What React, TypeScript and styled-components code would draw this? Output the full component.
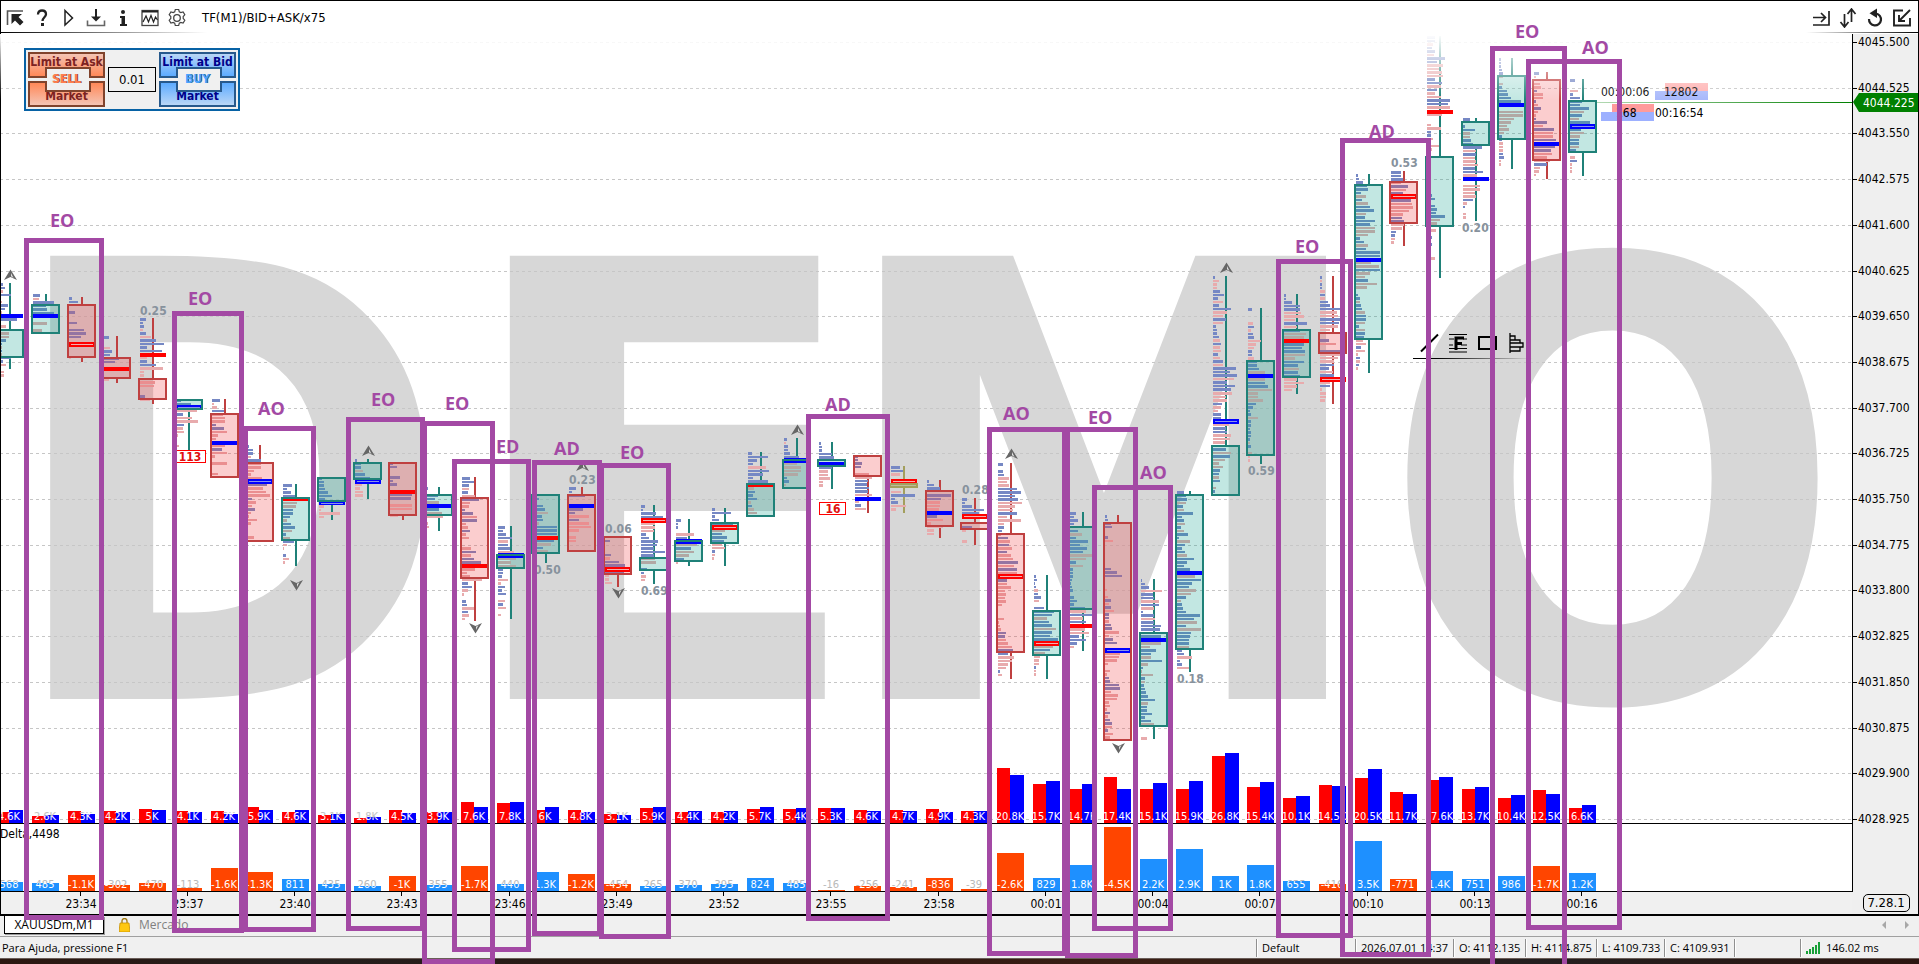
import React from 'react';
import styled, { createGlobalStyle, css } from 'styled-components';

const UI = `'DejaVu Sans Condensed', 'Noto Sans', sans-serif`;
const STATUS = `'Open Sans', 'Noto Sans', sans-serif`;

const GlobalStyle = createGlobalStyle`
  * { box-sizing: border-box; }
  html, body { margin: 0; padding: 0; }
  body { background: #f0f0f0; color: #000; font: 13px/16px ${UI}; overflow: hidden; }
  button, input { font: inherit; color: inherit; }
`;

/* ---------- data ---------- */

type Tone = 'up' | 'down' | 'flat';
type Poc = [top: number, height: number, color: 'b' | 'r', hollow?: boolean];
interface Candle {
  wick: [number, number];
  body: [number, number];
  tone: Tone;
  poc: Poc;
  rows: number[];
}

// rows: volume-profile bars, one per price step; positive = ask side, negative = bid side
const k = (wick: [number, number], body: [number, number], tone: Tone, poc: Poc, rows: number[]): Candle => ({ wick, body, tone, poc, rows });

const CANDLES: Candle[] = [
  k([283, 369], [329, 358], 'up', [314, 4, 'b'], [6, 8, -6, 14, 0, -5, 11, 8, -5, 14, 20, 0, -9, 16, -12, -12, 9, 5, -5, 5, -5, 14, 6, -9, 0, -7, -7]),
  k([294, 304], [304, 334], 'up', [314, 4, 'b'], [7, -6, 21, 13, 14, 21, 0, 0, -14, 0, -9]),
  k([297, 362], [304, 358], 'down', [342, 5, 'r', true], [3, 9, 0, 0, 6, 0, 0, 8, 0, 15, 17, 12, 0, 0, 0, 0, 0, -2]),
  k([336, 383], [357, 379], 'down', [367, 4, 'r'], [5, 0, 0, -6, 8, 6, 15, 11, 0, 0, 0, 0, -5]),
  k([318, 404], [378, 400], 'down', [353, 4, 'r'], [6, 3, 4, -3, 6, -11, 16, 24, 7, 22, 0, -7, 7, 16, -23, -4, -4, 0, -15, -14, 0, 0, 5, -10]),
  k([399, 450], [399, 410], 'up', [405, 4, 'b', true], [5, 15, 0, -21, 7, -16, -22, 8, -7, -8, -2, 1, 1, -3]),
  k([399, 413], [413, 478], 'down', [441, 4, 'b'], [8, -2, -5, 12, -11, -13, -13, 4, 12, -15, -6, -4, 0, -13, 10, -15, -3, 0, -15, 0, 0, -6]),
  k([445, 462], [462, 542], 'down', [479, 5, 'b', true], [2, 6, 6, -4, 14, -14, -14, -7, -4, -15, 0, 20, -16, -19, -23, 5, -9, -5, 8, -4, -2, -10, -4, 0, 0, 0, -7]),
  k([484, 566], [497, 541], 'up', [498, 3, 'r'], [9, 4, 8, 12, 0, -14, -13, 10, 10, 7, -4, 8, 12, -9, 3, -7, 11, -4, -1, 0, 3, -6, -2]),
  k([477, 520], [477, 502], 'up', [501, 4, 'b', true], [3, 5, 5, 6, 9, 13, 6, 0, -5, -2, -21, -5]),
  k([459, 499], [462, 480], 'up', [479, 5, 'b', true], [2, 6, 6, -8, 10, 15, 0, -7, -5, -8, -8]),
  k([462, 520], [462, 516], 'down', [490, 4, 'r'], [3, 7, 0, 0, 10, 3, 7, 0, 0, 22, 21, 0, -22, -22, 0, -8]),
  k([487, 531], [494, 516], 'up', [504, 4, 'b'], [2, 1, 12, 9, -13, 0, 13, -16, -17, 1, -2, -3]),
  k([477, 621], [497, 579], 'down', [564, 4, 'r'], [8, 12, 7, -7, 6, -13, 17, -8, -7, 3, 11, -15, 15, -4, -6, 8, -4, -7, 0, 0, -9, 14, -9, 12, 19, 0, -13, -5, -8, -20, 6, 10, -6, -2, 0, 4, 5, -12, 6, -7, -3]),
  k([526, 619], [554, 569], 'up', [553, 5, 'b'], [7, 5, 8, 14, -10, 10, 12, -16, 0, -18, -13, -18, 5, 5, 4, -10, -3, 7, 4, 8, 0, -7, 5, -8, 0, -3]),
  k([494, 563], [494, 554], 'up', [536, 4, 'r'], [0, 6, 2, 10, 12, -15, 9, 10, -6, 24, 24, 24, 0, 21, -18, 10, -15]),
  k([487, 494], [494, 552], 'down', [504, 4, 'b'], [7, 3, 16, 0, 0, 0, 14, 6, -20, 10, -20, -22, -10, 0, -7, -7]),
  k([536, 587], [536, 575], 'down', [567, 5, 'r', true], [0, 5, 0, 0, 0, 6, -5, 14, 20, 0, 19, -4, -4, -7]),
  k([505, 584], [557, 571], 'up', [518, 5, 'r', true], [4, 2, 15, 22, 0, -14, -14, -13, 5, 8, 17, 16, 13, 24, 13, -14, -15, 0, 6, 3, -5, -4]),
  k([519, 566], [540, 562], 'up', [539, 5, 'b'], [5, 2, 2, 0, -18, 11, 0, -21, 15, -18, -13, 8, -2]),
  k([508, 566], [522, 544], 'up', [525, 5, 'r', true], [3, 19, 3, 7, 21, 0, -13, 10, 15, 12, -10, -13, 3, -3, -2]),
  k([452, 483], [483, 517], 'up', [484, 3, 'r'], [4, 20, 9, 5, -18, 21, 15, 5, 20, 0, -6, 7, 5, 9, -3, 4, -6, -9]),
  k([438, 459], [459, 489], 'up', [458, 5, 'b'], [3, -2, 4, 4, 6, 15, 0, -13, -17, -17, -14, 3, 5, -2]),
  k([442, 489], [459, 467], 'up', [462, 4, 'b'], [2, 3, 3, 13, 15, 0, 0, 13, -9, -9, -11, -4, -4]),
  k([455, 513], [455, 477], 'down', [497, 4, 'b'], [3, 3, 7, 6, 0, -14, -17, 13, 12, 14, 13, -17, 0, -4, 6, -11]),
  k([466, 513], [483, 488], 'flat', [479, 4, 'r', true], [9, 12, -9, 0, 0, 0, 0, -10, 24, 4, 7, -15, -5]),
  k([480, 538], [490, 527], 'down', [511, 4, 'b'], [2, 7, 13, 0, 24, 14, -13, -13, -12, 0, 10, -16, -4, -16, -7, -7]),
  k([498, 545], [522, 530], 'down', [514, 5, 'r', true], [5, 3, 10, 22, 17, 0, 0, 0, 10, -4, 0, 0, -5]),
  k([463, 679], [533, 653], 'down', [574, 5, 'r', true], [5, 0, 5, 6, -11, -9, -11, 19, 23, 17, 20, -24, -17, -15, 19, -9, -23, -6, 6, 4, -3, 10, -12, 11, -14, 9, -13, -15, 20, -16, 19, -19, 0, 9, -9, -13, -7, -8, -7, -8, -4, 0, 0, 0, -6, -1, -2, -3, 8, 7, -8, -10, -14, 15, 10, -16, -14, -10, -8, 2, -4]),
  k([575, 679], [610, 656], 'up', [641, 5, 'r', true], [2, 3, 1, 2, -4, 4, 7, -5, 0, 10, 20, 18, -13, 15, 18, -22, 18, 16, 24, 0, -19, 16, -11, -6, -5, -5, 2, -2, -2]),
  k([512, 651], [526, 610], 'up', [624, 4, 'r'], [6, 4, 8, 4, 0, 8, -12, 6, 18, 10, 17, 13, -22, -16, 6, -13, 3, 3, 3, 2, 1, 2, 3, 0, 4, 7, 4, 15, -16, 22, -13, 16, 0, -15, -19, 9, 16, 7, -4]),
  k([515, 522], [522, 741], 'down', [648, 5, 'b', true], [2, 3, 6, 7, 0, 0, 3, -8, 0, 0, 0, 0, 0, 0, 0, 6, 12, 17, 0, 0, 0, -2, 0, -3, 6, -4, 6, -9, 4, 4, -4, 6, 7, -14, -4, 8, 12, 0, 0, -15, -14, -12, -3, 0, -5, -2, 4, 5, 14, 15, -6, -13, -12, -4, -5, -2, 5, -3, 5, 7, -7, 3, -8, -5]),
  k([579, 739], [632, 727], 'up', [638, 4, 'b'], [1, 4, 8, -21, 12, 13, -18, 18, -13, 2, 13, -14, 13, 20, 19, -12, 20, 0, -20, -9, 15, 10, -10, 21, -7, 2, -1, -12, 4, -4, 3, 4, 5, 7, 14, -7, 6, 6, 11, 4, 10, -13, 0, 0, 0, -6]),
  k([491, 672], [494, 650], 'up', [571, 4, 'b'], [7, 9, 10, -9, 6, -7, 16, 5, 7, -8, 4, -7, 11, 2, -13, 8, 5, 8, -10, 17, 10, 7, 13, 0, -18, 24, 15, 12, -19, -14, 9, -4, 5, 6, 9, 23, 17, -20, 9, -24, 14, 13, 12, 12, -12, 5, 7, -15, 3, 5, -12]),
  k([276, 445], [445, 496], 'up', [419, 5, 'b', true], [2, -6, -4, -4, 7, 11, 5, -10, 6, 18, -14, -10, 13, -10, 3, 4, 4, 6, -7, 8, -7, -8, 5, -7, 10, -10, 23, 17, 24, -21, 14, 22, 18, -19, -13, -14, 9, -8, -5, 8, 8, 0, -16, 13, 14, -18, -17, -12, 16, 13, -18, 17, -12, -6, -10, 7, 6, -6, 7, 0, -3, 2]),
  k([308, 464], [360, 456], 'up', [374, 4, 'b'], [4, 0, 0, 0, -5, 6, -3, 5, 6, -13, -8, -6, 4, 4, -6, 9, 9, 11, -17, 0, -17, 17, 20, -24, -10, -10, -15, 8, 5, 2, 3, -10, 3, 3, 2, 3, 3, 2, -2, 3, 0, -4, -2, -2]),
  k([294, 394], [329, 378], 'up', [339, 4, 'r'], [2, 2, 8, 16, 16, -17, -20, -11, 23, -13, 16, -22, -20, 0, 20, 18, 21, -21, -11, 20, 14, -15, 14, 16, -13, -20, -13, -8]),
  k([276, 404], [332, 354], 'down', [377, 5, 'r', true], [2, -2, 2, 2, -5, 5, -5, 8, 10, 22, -17, -18, 22, 19, -18, -10, 0, 0, 9, -16, 0, 21, -20, -18, -14, 14, 9, -13, 14, 0, -10, 10, -2, -6, -6, -5]),
  k([174, 373], [184, 340], 'up', [258, 4, 'b'], [2, 3, 7, 11, 12, 5, -10, 6, -12, 14, 18, -10, 9, 19, 14, -19, -19, -12, 4, 8, -12, 10, 24, 24, 0, -15, -23, 24, -14, -9, 12, -21, -11, 0, 2, 4, -4, 5, 6, -9, 10, 10, -9, 3, -9, 9, 8, -7, -10, 5, -9, -2, 4, -4, 3, -2]),
  k([171, 246], [181, 224], 'down', [194, 5, 'r', true], [10, 10, 12, -10, 17, -15, 12, 0, 20, -21, -22, -18, -12, 11, 13, -13, -11, 5, 4, -4, -3]),
  k([36, 278], [156, 227], 'up', [110, 4, 'r'], [8, 8, -6, 5, 8, -7, 18, 10, -16, -12, -15, -16, 8, 15, -14, 10, -8, -14, 23, 21, -23, 0, -15, 0, 0, -4, -14, 4, 4, -6, 1, -12, -5, 0, 0, 4, 0, 0, 0, 0, 0, 0, 0, 0, 0, 5, 8, 4, 8, 10, 9, 18, -13, -10, 4, -9, 0, 5, -4, 5, 0, 0, 0, -8]),
  k([118, 221], [121, 146], 'up', [177, 4, 'b'], [7, 0, 2, 12, -7, -7, 8, 10, 19, -13, 13, -12, -13, -15, 12, 20, -14, -17, 0, -17, -17, -12, -13, 10, -4, 2, 0, -3, -3]),
  k([58, 169], [75, 140], 'up', [103, 4, 'b'], [2, 2, 2, 3, 4, -4, 0, -4, 3, 8, 9, 12, 22, -17, 0, -24, -24, -15, -12, -8, -10, -5, 3, 3, -4, -4, -4, 4, 5, -2, -2]),
  k([72, 179], [79, 161], 'down', [142, 4, 'b'], [5, -2, 0, -6, -7, 3, -9, -9, 2, -4, 7, -4, -2, 2, 13, -9, 20, -19, -19, 22, 0, 21, 17, -18, -13, -16, 13, -6, -5, -2]),
  k([79, 176], [100, 153], 'up', [124, 5, 'b', true], [5, 0, 0, -8, 3, 10, 12, 10, 19, -14, 12, -9, 20, 0, 11, -14, -10, 9, 9, -9, 6, 0, -5, 7, -2, -2, -2]),
];

type Flow = [sell: number, buy: number, total: string, deltaHeight: number, delta: string];
const FLOWS: Flow[] = [
  [11, 13, '4.6K', 9, '568'], [7, 8, '2.6K', 8, '485'], [12, 9, '4.3K', 16, '-1.1K'], [12, 11, '4.2K', 6, '-302'],
  [14, 13, '5K', 8, '-470'], [12, 11, '4.1K', 3, '-113'], [12, 9, '4.2K', 23, '-1.6K'], [16, 13, '5.9K', 19, '-1.3K'],
  [11, 13, '4.6K', 12, '811'], [8, 9, '3.1K', 7, '435'], [5, 6, '1.8K', 5, '260'], [13, 10, '4.5K', 15, '-1K'],
  [11, 11, '3.9K', 6, '355'], [21, 16, '7.6K', 25, '-1.7K'], [20, 21, '7.8K', 7, '440'], [13, 16, '6K', 19, '1.3K'],
  [13, 11, '4.8K', 17, '-1.2K'], [9, 8, '3.1K', 7, '-454'], [15, 16, '5.9K', 5, '265'], [11, 12, '4.4K', 6, '370'],
  [11, 12, '4.2K', 7, '395'], [14, 16, '5.7K', 13, '824'], [14, 15, '5.4K', 8, '485'], [15, 15, '5.3K', 1, '-16'],
  [13, 12, '4.6K', 5, '-256'], [13, 12, '4.7K', 4, '-241'], [14, 11, '4.9K', 13, '-836'], [12, 12, '4.3K', 2, '-39'],
  [55, 48, '20.8K', 38, '-2.6K'], [39, 42, '15.7K', 13, '829'], [34, 39, '14.7K', 26, '1.8K'], [46, 34, '17.4K', 64, '-4.5K'],
  [34, 40, '15.1K', 32, '2.2K'], [34, 42, '15.9K', 42, '2.9K'], [67, 70, '26.8K', 15, '1K'], [36, 41, '15.4K', 26, '1.8K'],
  [25, 27, '10.1K', 10, '655'], [38, 37, '14.5K', 7, '-416'], [45, 54, '20.5K', 50, '3.5K'], [31, 29, '11.7K', 12, '-771'],
  [43, 46, '17.6K', 20, '1.4K'], [34, 36, '13.7K', 12, '751'], [25, 28, '10.4K', 15, '986'], [33, 29, '12.5K', 25, '-1.7K'],
  [15, 18, '6.6K', 18, '1.2K'],
];

const TIMES = ['23:34', '23:37', '23:40', '23:43', '23:46', '23:49', '23:52', '23:55', '23:58', '00:01', '00:04', '00:07', '00:10', '00:13', '00:16'];
const PRICES = Array.from({ length: 18 }, (_, i) => ({
  y: Math.round(42 + i * 45.7),
  label: (4045.5 - i * 0.975).toFixed(3),
}));
const RATIOS: [number, number, string][] = [
  [140, 315, '0.25'], [534, 574, '0.50'], [569, 484, '0.23'], [605, 533, '0.06'], [641, 595, '0.69'], [962, 494, '0.28'],
  [1177, 683, '0.18'], [1248, 475, '0.59'], [1391, 167, '0.53'], [1462, 232, '0.20'],
];
const MARKS: [number, number, 1 | -1][] = [
  [10, 275, 1], [368, 451, 1], [582, 466, 1], [797, 430, 1], [1011, 454, 1], [1226, 268, 1],
  [296, 585, -1], [475, 628, -1], [618, 593, -1], [1118, 748, -1],
];
const COUNTS: [number, number, string][] = [[176, 450, '113'], [819, 502, '16']];

const ZONES: [number, number, number, number][] = [
  [24, 238, 104, 920], [172, 311, 244, 933], [243, 426, 316, 932], [346, 417, 425, 931], [422, 421, 495, 964],
  [452, 459, 531, 952], [532, 460, 602, 936], [599, 463, 671, 939], [806, 414, 890, 921], [987, 427, 1067, 956],
  [1065, 427, 1138, 958], [1092, 485, 1173, 931], [1276, 259, 1353, 938], [1340, 138, 1431, 957], [1490, 46, 1567, 975],
  [1526, 59, 1622, 930],
];
const ZONE_TAGS: [number, number, string][] = [
  [50, 227, 'EO'], [188, 305, 'EO'], [258, 415, 'AO'], [371, 406, 'EO'], [445, 410, 'EO'], [496, 453, 'ED'], [554, 455, 'AD'],
  [620, 459, 'EO'], [825, 411, 'AD'], [1003, 420, 'AO'], [1088, 424, 'EO'], [1140, 479, 'AO'], [1295, 253, 'EO'],
  [1369, 138, 'AD'], [1515, 38, 'EO'], [1582, 54, 'AO'],
];

const TONES: Record<Tone, { line: string; fill: string }> = {
  up: { line: '#1f8178', fill: 'rgba(11,159,139,.25)' },
  down: { line: '#bf4040', fill: 'rgba(239,55,60,.25)' },
  flat: { line: '#a39f5d', fill: 'rgba(163,159,93,.5)' },
};

const centre = (i: number) => Math.round(10 + 35.75 * i);
const ROW_STEP = 3.515;

/* ---------- styled parts ---------- */

const Terminal = styled.div`
  position: relative;
  display: flex;
  flex-direction: column;
  min-height: 100vh;
  overflow: hidden;
`;
const TopBar = styled.header`
  display: flex;
  justify-content: space-between;
  height: 34px;
  padding: 0 3px 0 0;
  background:
    linear-gradient(90deg, #000, transparent) left bottom 1px / 206px 1px no-repeat,
    linear-gradient(270deg, #000, transparent) right bottom 1px / 112px 1px no-repeat,
    #fff;
  border: solid #000;
  border-width: 1px 1px 0;
`;
const ToolGroup = styled.nav`
  display: flex;
  align-items: center;
`;
const ToolButton = styled.button`
  display: grid;
  place-items: center;
  width: 27px;
  height: 24px;
  padding: 0;
  border: 0;
  background: none;
  color: #222;
`;
const ChartTitle = styled.h1`
  margin: 0 0 0 12px;
  font: 13px/16px ${UI};
`;
const Workspace = styled.main`
  display: grid;
  grid-template-columns: minmax(0, 1fr) 67px;
  border-bottom: 2px solid #000;
`;
const Panes = styled.div`
  display: flex;
  flex-direction: column;
  min-width: 0;
`;
const PricePane = styled.section`
  position: relative;
  background: #fff;
  border-bottom: 1px solid #000;
`;
const DeltaPane = styled.section`
  background: #fff;
  border-bottom: 1px solid #000;
`;
const Plot = styled.svg<{ $h: number }>`
  display: block;
  width: 100%;
  height: ${(p) => p.$h}px;
  font: 12px ${UI};
`;
const PriceAxis = styled.aside`
  display: flex;
  flex-direction: column;
  justify-content: space-between;
  background: #efefef;
  border-right: 1px solid #000;
`;
const Scale = styled.div`
  border-left: 1px solid #000;
  height: 858px;
`;
const Version = styled.span`
  align-self: center;
  margin: 0 0 2px 2px;
  width: 47px;
  height: 18px;
  border: 1px solid #000;
  border-radius: 5px;
  text-align: center;
`;

const TradePanel = styled.form`
  position: absolute;
  top: 14px;
  left: 24px;
  display: flex;
  align-items: center;
  gap: 3px;
  padding: 2px;
  background: #f0f0f0;
  border: 2px solid #0762a5;
`;
const Side = styled.div`
  position: relative;
  display: flex;
  flex-direction: column;
  gap: 3px;
`;
type Kind = 'sell' | 'buy';
const PALETTE = {
  sell: { edge: '#80432c', light: '#f4c4b4', strong: '#ff8858', text: '#7d2222', word: '#ff7f50' },
  buy: { edge: '#27598c', light: '#b9d6f6', strong: '#5dabff', text: '#00008b', word: '#4aa3ff' },
};
const OrderButton = styled.button<{ $kind: Kind; $low?: boolean }>`
  position: relative;
  display: flex;
  justify-content: center;
  align-items: ${(p) => (p.$low ? 'flex-end' : 'flex-start')};
  width: 77px;
  height: 26px;
  padding: 0;
  white-space: nowrap;
  border: 2px solid ${(p) => PALETTE[p.$kind].edge};
  color: ${(p) => PALETTE[p.$kind].text};
  font: bold 12px/17px ${UI};
  background: linear-gradient(${(p) => (p.$low ? '0deg' : '180deg')}, ${(p) => PALETTE[p.$kind].light}, ${(p) => PALETTE[p.$kind].strong});

  /* notch that makes room for the side's name */
  &::after {
    content: '';
    position: absolute;
    left: 15px;
    ${(p) => (p.$low ? 'top: -2px;' : 'bottom: -2px;')}
    width: 42px;
    height: 9px;
    border: solid ${(p) => PALETTE[p.$kind].edge};
    border-width: ${(p) => (p.$low ? '0 2px 2px' : '2px 2px 0')};
    background: #f0f0f0;
  }
`;
const SideWord = styled.span<{ $kind: Kind }>`
  position: absolute;
  inset: 19px 0 auto;
  text-align: center;
  font: bold 12px/17px ${UI};
  color: ${(p) => PALETTE[p.$kind].word};
  text-shadow: 1px 0 0 ${(p) => PALETTE[p.$kind].edge};
  pointer-events: none;
`;
const Lots = styled.input`
  width: 48px;
  height: 25px;
  padding: 0;
  border: 1px solid #000;
  background: #f0f0f0;
  text-align: center;
`;
const DrawTools = styled.div`
  position: absolute;
  top: 298px;
  left: 1413px;
  display: flex;
  align-items: flex-start;
  width: 120px;
  height: 27px;
  padding: 0 2px 0 1px;
  background: linear-gradient(90deg, #000 20%, transparent) left bottom / 100% 1px no-repeat;
`;
const DrawButton = styled(ToolButton)`
  width: 29px;
  height: 22px;
  color: #000;
`;

const Tabs = styled.nav`
  display: flex;
  align-items: flex-start;
  height: 21px;
  padding-left: 4px;
  border-bottom: 1px solid #a0a0a0;
  font: 12px/16px ${STATUS};
`;
const tabBase = css`
  height: 18px;
  padding: 0;
  border: 0;
  background: none;
  white-space: nowrap;
`;
const ActiveTab = styled.button`
  ${tabBase}
  width: 100px;
  background: #fff;
  border: solid #000;
  border-width: 0 1px 1px;
  box-shadow: 1px 1px 0 #999;
`;
const MarketTab = styled.button`
  ${tabBase}
  display: flex;
  align-items: center;
  gap: 9px;
  margin-left: 15px;
  color: #808080;
`;
const Pager = styled.div`
  display: flex;
  gap: 6px;
  margin: 0 5px 0 auto;
`;
const PageButton = styled.button`
  ${tabBase}
  width: 16px;
`;
const StatusBar = styled.footer`
  display: flex;
  align-items: center;
  height: 21px;
  font: 11px/16px ${STATUS};
`;
const Hint = styled.span`
  flex: 1;
  padding-left: 2px;
`;
const Cell = styled.span<{ $w: number }>`
  display: flex;
  align-items: center;
  gap: 6px;
  width: ${(p) => p.$w}px;
  height: 18px;
  padding-left: 5px;
  border-left: 1px solid #8f8f8f;
  box-shadow: inset 1px 0 0 #fff;
  white-space: nowrap;
`;
const Desktop = styled.div`
  flex: 1;
  min-height: 6px;
  border-top: 1px solid #6a5d58;
  background: linear-gradient(90deg, #2c1710, #241f1e 15%, #2d1710 40%, #3a1f15 60%, #241f20 80%, #2c1510);
`;
const Overlay = styled.svg`
  position: absolute;
  inset: 0;
  width: 100%;
  height: 100%;
  pointer-events: none;
  font: bold 18px 'Open Sans', 'Noto Sans', sans-serif;
`;

/* ---------- drawings ---------- */

const Glyph = ({ children }: { children: React.ReactNode }) => (
  <svg width="20" height="20" viewBox="0 0 20 20" fill="none" stroke="currentColor" strokeWidth="1.5">{children}</svg>
);

const CandleShape = ({ c, x }: { c: Candle; x: number }) => {
  const t = TONES[c.tone];
  const [top, h, color, hollow] = c.poc;
  const paint = color === 'b' ? '#0000ff' : '#ff0000';
  const rowTop = (i: number) => Math.round(c.wick[0] + i * ROW_STEP);
  return (
    <g shapeRendering="crispEdges">
      {c.wick[0] < c.body[0] && <rect x={x - 1} y={c.wick[0]} width={2} height={c.body[0] - c.wick[0]} fill={t.line} />}
      {c.wick[1] > c.body[1] && <rect x={x - 1} y={c.body[1]} width={2} height={c.wick[1] - c.body[1]} fill={t.line} />}
      {c.rows.map((w, i) => w !== 0 && (
        <rect key={i} x={x - 13} y={rowTop(i)} width={Math.abs(w)} height={rowTop(i + 1) - rowTop(i) - 1} fill={w > 0 ? '#7688c4' : '#e8abad'} />
      ))}
      <rect x={x - 14} y={c.body[0] + 1} width={27} height={Math.max(c.body[1] - c.body[0] - 2, 1)} fill={t.fill} />
      <rect x={x - 13} y={top} width={26} height={h} fill={paint} />
      {hollow && <rect x={x - 11} y={top + 2} width={22} height={1} fill={color === 'b' ? '#8a94e8' : '#f3b0b0'} />}
      <rect x={x - 14} y={c.body[0] + 1} width={27} height={Math.max(c.body[1] - c.body[0] - 2, 2)} fill="none" stroke={t.line} strokeWidth={2} />
    </g>
  );
};

const PricePlot = () => (
  <Plot $h={789} role="img" aria-label="Price chart">
    <defs>
      <linearGradient id="fade" x1="0" y1="0" x2="0" y2="1">
        <stop offset="0" stopColor="#fff" />
        <stop offset="1" stopColor="#fff" stopOpacity="0" />
      </linearGradient>
      <linearGradient id="quote" gradientUnits="userSpaceOnUse" x1="1597" y1="0" x2="1853" y2="0">
        <stop offset="0" stopColor="#008000" stopOpacity=".3" />
        <stop offset="1" stopColor="#008000" />
      </linearGradient>
    </defs>
    <g transform="translate(0,-34)">
      <text y="699" fill="#d7d7d7" fontSize="608" fontWeight="bold">
        <tspan x="0">D</tspan>
        <tspan x="454" fontFamily="DejaVu Sans">E</tspan>
        <tspan x="832 1380">MO</tspan>
      </text>
      {PRICES.map((p) => (
        <line key={p.y} x1="0" x2="100%" y1={p.y + 0.5} y2={p.y + 0.5} stroke="#c6c6c6" strokeDasharray="3 3" />
      ))}
      {CANDLES.map((c, i) => <CandleShape key={i} c={c} x={centre(i)} />)}
      {MARKS.map(([x, y, d]) => (
        <g key={x} transform={`translate(${x + 0.5},${y}) scale(1,${d})`}>
          <path d="M0 -5.500 L6.500 5 L0 2 L-6.500 5Z" fill="#666" />
          <path d="M.5 -2 L3 3 L.5 1.200Z" fill="#e4e4e4" />
        </g>
      ))}
      {RATIOS.map(([x, y, s]) => <text key={x} x={x} y={y} fill="#87929d" fontWeight="bold">{s}</text>)}
      {COUNTS.map(([x, y, s]) => (
        <g key={s}>
          <rect x={x + 0.5} y={y + 0.5} width={x < 200 ? 29 : 26} height="12" fill="#fff" stroke="#f00" />
          <text x={x + 14} y={y + 11} fill="#e01010" fontWeight="bold" textAnchor="middle">{s}</text>
        </g>
      ))}
      <rect x="1597" y="102" width="400" height="1" fill="url(#quote)" />
      <rect x="1665" y="83" width="43" height="8" fill="#ffb0b0" />
      <rect x="1655" y="91" width="53" height="9" fill="#a8b8fb" />
      <rect x="1612" y="104" width="42" height="8" fill="#ff9b9b" />
      <rect x="1601" y="112" width="53" height="9" fill="#9db0ff" />
      <text x="1601" y="96">00:00:06</text>
      <text x="1664" y="96">12802</text>
      <text x="1616" y="117">168</text>
      <text x="1655" y="117">00:16:54</text>
      {FLOWS.map(([sell, buy, label], i) => {
        const x = centre(i) - 14;
        const edge = 823 - (sell + buy) / 2;
        return (
          <g key={i}>
            <linearGradient id={`v${i}`} gradientUnits="userSpaceOnUse" x1="0" x2="0" y1={edge} y2={edge + 0.1}>
              <stop offset="0" stopColor="#c2c2c2" />
              <stop offset="1" stopColor="#fff" />
            </linearGradient>
            <rect x={x} y={823 - sell} width={13} height={sell} fill="#f00" />
            <rect x={x + 13} y={823 - buy} width={14} height={buy} fill="#00f" />
            <text x={x + 13} y="820" fontSize="11" textAnchor="middle" fill={`url(#v${i})`}>{label}</text>
          </g>
        );
      })}
      <rect x="0" y="34" width="100%" height="66" fill="url(#fade)" />
      <rect x="0" y="34" width="1" height="789" fill="#000" />
      <rect x="0" y="34" width="1" height="66" fill="url(#fade)" />
    </g>
  </Plot>
);

const DeltaPlot = () => (
  <Plot $h={67} role="img" aria-label="Delta histogram">
    <g transform="translate(0,-824)">
      {FLOWS.map(([, , , h, label], i) => {
        const x = centre(i) - 14;
        return (
          <g key={i}>
            <linearGradient id={`d${i}`} gradientUnits="userSpaceOnUse" x1="0" x2="0" y1={891 - h} y2={891.1 - h}>
              <stop offset="0" stopColor="#b8b8b8" />
              <stop offset="1" stopColor="#fff" />
            </linearGradient>
            <rect x={x} y={891 - h} width={27} height={h} fill={label[0] === '-' ? '#ff4500' : '#1e90ff'} />
            <text x={x + 13} y="888" fontSize="11" textAnchor="middle" fill={`url(#d${i})`}>{label}</text>
          </g>
        );
      })}
      <text x="0" y="838">Delta,4498</text>
      <rect x="0" y="824" width="1" height="67" fill="#000" />
    </g>
  </Plot>
);

const Tool = ({ label, children }: { label: string; children: React.ReactNode }) => (
  <ToolButton type="button" aria-label={label}><Glyph>{children}</Glyph></ToolButton>
);

const OrderSide = ({ kind, limit, word }: { kind: Kind; limit: string; word: string }) => (
  <Side>
    <OrderButton type="button" $kind={kind}>{limit}</OrderButton>
    <OrderButton type="button" $kind={kind} $low>Market</OrderButton>
    <SideWord $kind={kind}>{word}</SideWord>
  </Side>
);

export default function App() {
  return (
    <Terminal>
      <GlobalStyle />
      <TopBar>
        <ToolGroup>
          <Tool label="Cursor">
            <path d="M2.500 17V3H18" strokeWidth="1.600" stroke="#555" />
            <path d="M6.500 6h10.500l-3.500 3 5 5-3.500 3.500-5-5-3.500 3.500z" fill="currentColor" stroke="none" />
          </Tool>
          <Tool label="Help">
            <path d="M6 6.500C6 3 8 2.500 10 2.500C13 2.500 14 4 14 6.200C14 9 10.500 9.500 10.500 13" strokeWidth="2.300" />
            <rect x="9" y="15" width="3" height="3" fill="currentColor" stroke="none" />
          </Tool>
          <Tool label="Play"><path d="M6 2.500V17L13.500 10Z" /></Tool>
          <Tool label="Download">
            <path d="M10 1V9" strokeWidth="2" />
            <path d="M1.500 12.500V17.500H18.500V12.500" strokeWidth="1.600" stroke="#666" />
            <path d="M5 8.500H15L10 13.500Z" fill="currentColor" stroke="none" />
          </Tool>
          <Tool label="Info">
            <circle cx="10" cy="4" r="2" fill="currentColor" stroke="none" />
            <path d="M7 8H12V16H14V18H7V16H8.500V10H7Z" fill="currentColor" stroke="none" />
          </Tool>
          <Tool label="Indicators">
            <rect x="2" y="2.500" width="16" height="15" stroke="#444" strokeWidth="1.300" />
            <path d="M2 3.500H18" strokeWidth="2" />
            <path d="M3 14L6 8L8.500 14L11 7.500L13.500 14L15.500 9L17.500 12" strokeWidth="1.200" />
          </Tool>
          <Tool label="Settings">
            <circle cx="10" cy="10" r="3.300" strokeWidth="1.300" stroke="#444" />
            <path d="M8.300 1.500h3.400l.6 2.300 1.500.8 2.300-.7 1.700 2.900-1.600 1.800v1.800l1.600 1.800-1.700 2.900-2.300-.7-1.500.8-.6 2.300H8.300l-.6-2.300-1.500-.8-2.300.7-1.700-2.900 1.600-1.800V8.600L2.200 6.800l1.700-2.900 2.300.7 1.500-.8z" strokeWidth="1.200" stroke="#444" />
          </Tool>
          <ChartTitle>TF(M1)/BID+ASK/x75</ChartTitle>
        </ToolGroup>
        <ToolGroup>
          <Tool label="Scroll to end"><path d="M18 3V17H2M2 9.500H15M10 5L14.500 9.500L10 14" strokeWidth="1.700" /></Tool>
          <Tool label="Fit vertically"><path d="M6.500 6V18.500M2.500 14L6.500 19L10.500 14M13.500 14V1M9.500 6L13.500 1L17.500 6" strokeWidth="1.700" /></Tool>
          <Tool label="Reset">
            <path d="M11 5.500A6 6 0 1 1 4 11" strokeWidth="2.200" />
            <path d="M4.500 5.200L12 .5V10Z" fill="currentColor" stroke="none" />
          </Tool>
          <Tool label="Dock"><path d="M11 2.500H2V17.500H18V10M18 2L7 13M7 7V13H13" strokeWidth="1.900" /></Tool>
        </ToolGroup>
      </TopBar>

      <Workspace>
        <Panes>
          <PricePane>
            <PricePlot />
            <TradePanel>
              <OrderSide kind="sell" limit="Limit at Ask" word="SELL" />
              <Lots aria-label="Lots" defaultValue="0.01" />
              <OrderSide kind="buy" limit="Limit at Bid" word="BUY" />
            </TradePanel>
            <DrawTools>
              <DrawButton type="button" aria-label="Line"><Glyph><path d="M2 18.500L19 1.500" strokeWidth="2" /></Glyph></DrawButton>
              <DrawButton type="button" aria-label="Fibonacci">
                <Glyph>
                  <path d="M1 1.500H19M1 6H6M15 6H19M1 12H5M13 12H19M1 15.500H19M1 19H19" strokeWidth="1" />
                  <path d="M8 17V5H16M8 10.500H14" strokeWidth="3" />
                </Glyph>
              </DrawButton>
              <DrawButton type="button" aria-label="Rectangle"><Glyph><rect x="2" y="4" width="17" height="12" strokeWidth="2" /></Glyph></DrawButton>
              <DrawButton type="button" aria-label="Profile">
                <Glyph><path d="M4 0V20M4 3H9V7H4M9 7H14V10H4M14 10H17V14H4M14 14V18H4" strokeWidth="1.300" /></Glyph>
              </DrawButton>
            </DrawTools>
          </PricePane>
          <DeltaPane><DeltaPlot /></DeltaPane>
          <Plot $h={22} role="img" aria-label="Time axis">
            {TIMES.map((t, i) => (
              <g key={t}>
                <rect x={centre(2 + i * 3) - 2} y="0" width="1" height="4" />
                <text x={centre(2 + i * 3) - 1} y="16" textAnchor="middle">{t}</text>
              </g>
            ))}
            <rect width="1" height="22" />
          </Plot>
        </Panes>
        <PriceAxis>
          <Scale>
            <Plot $h={789} role="img" aria-label="Price axis">
              <g transform="translate(0,-34)">
                {PRICES.map((p) => (
                  <g key={p.y}>
                    <rect x="0" y={p.y} width="4" height="1" />
                    <text x="5" y={p.y + 4}>{p.label}</text>
                  </g>
                ))}
                <path d="M0 102L6 93H66V112H6Z" fill="#008000" />
                <text x="10" y="107" fill="#fff">4044.225</text>
              </g>
            </Plot>
          </Scale>
          <Version>7.28.1</Version>
        </PriceAxis>
      </Workspace>

      <Tabs>
        <ActiveTab type="button">XAUUSDm,M1</ActiveTab>
        <MarketTab type="button">
          <svg width="11" height="14" viewBox="0 0 11 14">
            <path d="M3 6V3a2.500 2.500 0 0 1 5 0V6" fill="none" stroke="#a07a10" strokeWidth="1.300" />
            <path d="M1 5H10L11 14H0Z" fill="#ffc810" stroke="#c89000" strokeWidth=".8" />
          </svg>
          Mercado
        </MarketTab>
        <Pager>
          <PageButton type="button" aria-label="Previous"><svg width="5" height="8"><path d="M4 0V8L0 4Z" fill="#a8a8a8" /></svg></PageButton>
          <PageButton type="button" aria-label="Next"><svg width="5" height="8"><path d="M1 0V8L5 4Z" fill="#a8a8a8" /></svg></PageButton>
        </Pager>
      </Tabs>
      <StatusBar>
        <Hint>Para Ajuda, pressione F1</Hint>
        <Cell $w={99}>Default</Cell>
        <Cell $w={98}>2026.07.01 14:37</Cell>
        <Cell $w={72}>O: 4112.135</Cell>
        <Cell $w={71}>H: 4114.875</Cell>
        <Cell $w={68}>L: 4109.733</Cell>
        <Cell $w={70}>C: 4109.931</Cell>
        <Cell $w={66} />
        <Cell $w={119}>
          <svg width="14" height="12" viewBox="0 0 14 12" fill="#18a038">
            <path d="M0 9h2v3H0zM3 7h2v5H3zM6 5h2v7H6zM9 3h2v9H9zM12 0h2v12h-2z" />
          </svg>
          146.02 ms
        </Cell>
      </StatusBar>
      <Desktop />

      <Overlay aria-label="Marked zones">
        {ZONES.map(([x1, y1, x2, y2]) => (
          <rect key={x1} x={x1 + 2.5} y={y1 + 2.5} width={x2 - x1 - 5} height={y2 - y1 - 5} fill="none" stroke="#a349a4" strokeWidth="5" />
        ))}
        {ZONE_TAGS.map(([x, y, s]) => <text key={x} x={x} y={y} fill="#a349a4">{s}</text>)}
      </Overlay>
    </Terminal>
  );
}
